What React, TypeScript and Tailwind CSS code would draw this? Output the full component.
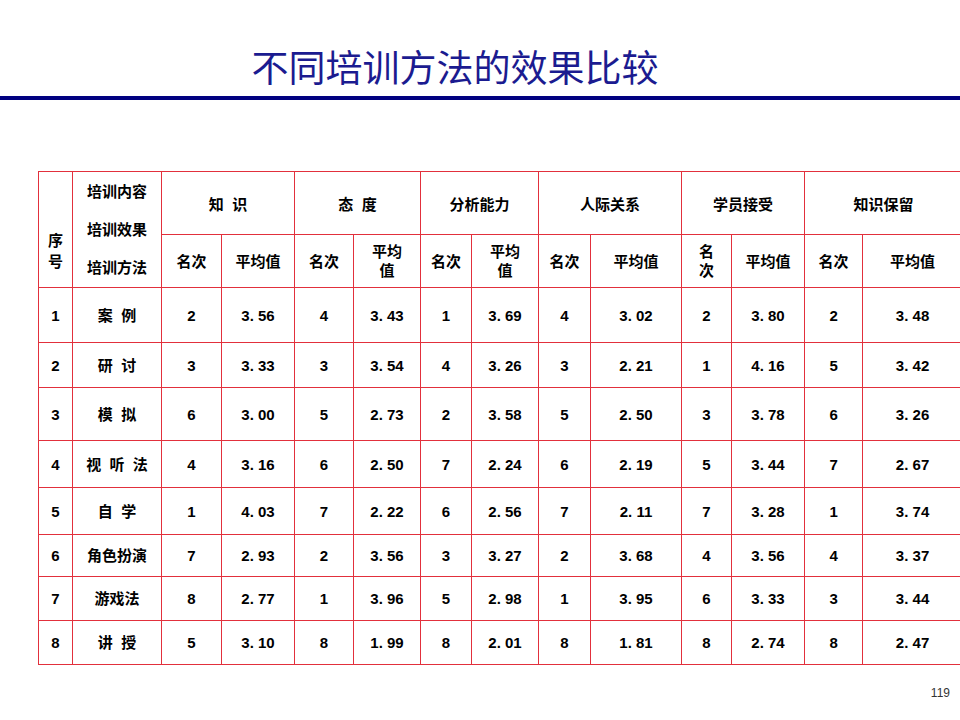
import React from 'react';

const rows: [string, string, string[]][] = [
  ['1', '案  例', ['2', '3.56', '4', '3.43', '1', '3.69', '4', '3.02', '2', '3.80', '2', '3.48']],
  ['2', '研  讨', ['3', '3.33', '3', '3.54', '4', '3.26', '3', '2.21', '1', '4.16', '5', '3.42']],
  ['3', '模  拟', ['6', '3.00', '5', '2.73', '2', '3.58', '5', '2.50', '3', '3.78', '6', '3.26']],
  ['4', '视  听  法', ['4', '3.16', '6', '2.50', '7', '2.24', '6', '2.19', '5', '3.44', '7', '2.67']],
  ['5', '自  学', ['1', '4.03', '7', '2.22', '6', '2.56', '7', '2.11', '7', '3.28', '1', '3.74']],
  ['6', '角色扮演', ['7', '2.93', '2', '3.56', '3', '3.27', '2', '3.68', '4', '3.56', '4', '3.37']],
  ['7', '游戏法', ['8', '2.77', '1', '3.96', '5', '2.98', '1', '3.95', '6', '3.33', '3', '3.44']],
  ['8', '讲  授', ['5', '3.10', '8', '1.99', '8', '2.01', '8', '1.81', '8', '2.74', '8', '2.47']],
];

const rowHeights = ['h-[55px]', 'h-[45px]', 'h-[53px]', 'h-[47px]', 'h-[47px]', 'h-[42px]', 'h-[44px]', 'h-[44px]'];

const colWidths = [34, 89, 60, 73, 59, 67, 51, 67, 52, 91, 50, 73, 58, 100];

const groups = ['知  识', '态  度', '分析能力', '人际关系', '学员接受', '知识保留'];

const cell = 'border border-[#e2303c] text-center align-middle p-0';

function fmt(v: string) {
  return v.includes('.') ? v.replace('.', '. ') : v;
}

export default function App() {
  return (
    <div
      className="w-[960px] h-[720px] overflow-hidden bg-white relative"
      style={{ fontFamily: '"Liberation Sans", "Noto Sans CJK SC", sans-serif' }}
    >
      {/* Title */}
      <div className="pt-[44px] h-[96px] flex justify-center">
        <h1
          className="text-[37px] leading-[44px] text-[#1b1b90] font-normal mr-[50px]"
          style={{ fontFamily: '"Noto Sans CJK SC", sans-serif' }}
        >
          不同培训方法的效果比较
        </h1>
      </div>
      <div className="h-[4px] bg-[#000080]" />

      {/* Table */}
      <div className="pl-[38px] pt-[71px]">
        <table className="border-collapse table-fixed w-[924px] text-[15px] font-bold text-black leading-[19px]">
          <colgroup>
            {colWidths.map((w, i) => (
              <col key={i} style={{ width: w }} />
            ))}
          </colgroup>
          <thead>
            <tr className="h-[63px]">
              <td rowSpan={2} className={`${cell} pt-[42px] leading-[21px]`}>
                序<br />号
              </td>
              <td rowSpan={2} className={cell}>
                <div className="flex flex-col gap-[19px] items-center">
                  <span>培训内容</span>
                  <span>培训效果</span>
                  <span>培训方法</span>
                </div>
              </td>
              {groups.map((g) => (
                <td key={g} colSpan={2} className={`${cell} whitespace-pre pt-[3px]`}>
                  {g}
                </td>
              ))}
            </tr>
            <tr className="h-[53px]">
              <td className={cell}>名次</td>
              <td className={cell}>平均值</td>
              <td className={cell}>名次</td>
              <td className={cell}>平均<br />值</td>
              <td className={cell}>名次</td>
              <td className={cell}>平均<br />值</td>
              <td className={cell}>名次</td>
              <td className={cell}>平均值</td>
              <td className={cell}>名<br />次</td>
              <td className={cell}>平均值</td>
              <td className={cell}>名次</td>
              <td className={cell}>平均值</td>
            </tr>
          </thead>
          <tbody>
            {rows.map(([no, name, vals], r) => (
              <tr key={no} className={rowHeights[r]}>
                <td className={cell}>{no}</td>
                <td className={`${cell} whitespace-pre`}>{name}</td>
                {vals.map((v, i) => (
                  <td key={i} className={`${cell} whitespace-pre`}>
                    {fmt(v)}
                  </td>
                ))}
              </tr>
            ))}
          </tbody>
        </table>
      </div>

      {/* Page number */}
      <div className="absolute right-[10px] top-[684px] text-[12px] text-[#333] font-normal">119</div>
    </div>
  );
}
